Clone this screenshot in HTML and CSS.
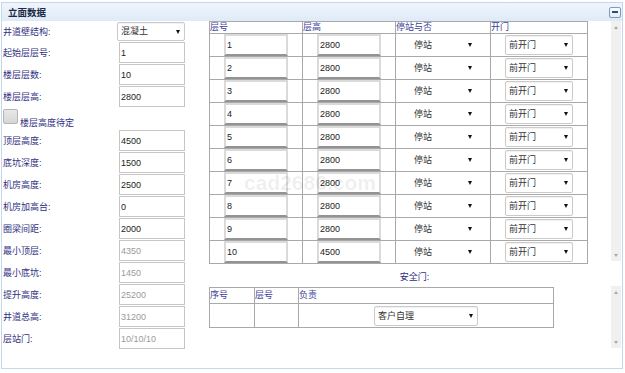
FILE: index.html
```html
<!DOCTYPE html>
<html lang="zh-CN">
<head>
    <meta charset="UTF-8">
    <title>立面数据</title>
    <link rel="stylesheet" href="styles.css">
</head>
<body>
    <div class="panel">
        <div class="panel-head">
            <span class="panel-title">立面数据</span>
            <span class="collapse"><i></i></span>
        </div>

        <div class="panel-body">
            <!-- 井道参数 -->
            <div class="params">
                <div class="row first">
                    <label>井道壁结构:</label>
                    <span class="dropdown wide"><select><option>混凝土</option></select></span>
                </div>
                <div class="row"><label>起始层层号:</label><input type="text" value="1"></div>
                <div class="row"><label>楼层层数:</label><input type="text" value="10"></div>
                <div class="row"><label>楼层层高:</label><input type="text" value="2800"></div>
                <div class="row check">
                    <span class="box"></span>
                    <label>楼层高度待定</label>
                </div>
                <div class="row"><label>顶层高度:</label><input type="text" value="4500"></div>
                <div class="row"><label>底坑深度:</label><input type="text" value="1500"></div>
                <div class="row"><label>机房高度:</label><input type="text" value="2500"></div>
                <div class="row"><label>机房加高台:</label><input type="text" value="0"></div>
                <div class="row"><label>圈梁间距:</label><input type="text" value="2000"></div>
                <div class="row"><label>最小顶层:</label><input type="text" value="4350" disabled></div>
                <div class="row"><label>最小底坑:</label><input type="text" value="1450" disabled></div>
                <div class="row"><label>提升高度:</label><input type="text" value="25200" disabled></div>
                <div class="row"><label>井道总高:</label><input type="text" value="31200" disabled></div>
                <div class="row"><label>层站门:</label><input type="text" value="10/10/10" disabled></div>
            </div>

            <div class="floors">
                <!-- 楼层列表 -->
                <div class="scroll-area tall">
                    <table class="grid floor-grid">
                        <colgroup>
                            <col class="c1"><col class="c2"><col class="c3"><col class="c4">
                        </colgroup>
                        <thead>
                            <tr><th>层号</th><th>层高</th><th>停站与否</th><th>开门</th></tr>
                        </thead>
                        <tbody>
                            <tr>
                                <td><input type="text" value="1"></td>
                                <td><input type="text" value="2800"></td>
                                <td><span class="dropdown plain"><select><option>停站</option></select></span></td>
                                <td><span class="dropdown"><select><option>前开门</option></select></span></td>
                            </tr>
                            <tr>
                                <td><input type="text" value="2"></td>
                                <td><input type="text" value="2800"></td>
                                <td><span class="dropdown plain"><select><option>停站</option></select></span></td>
                                <td><span class="dropdown"><select><option>前开门</option></select></span></td>
                            </tr>
                            <tr>
                                <td><input type="text" value="3"></td>
                                <td><input type="text" value="2800"></td>
                                <td><span class="dropdown plain"><select><option>停站</option></select></span></td>
                                <td><span class="dropdown"><select><option>前开门</option></select></span></td>
                            </tr>
                            <tr>
                                <td><input type="text" value="4"></td>
                                <td><input type="text" value="2800"></td>
                                <td><span class="dropdown plain"><select><option>停站</option></select></span></td>
                                <td><span class="dropdown"><select><option>前开门</option></select></span></td>
                            </tr>
                            <tr>
                                <td><input type="text" value="5"></td>
                                <td><input type="text" value="2800"></td>
                                <td><span class="dropdown plain"><select><option>停站</option></select></span></td>
                                <td><span class="dropdown"><select><option>前开门</option></select></span></td>
                            </tr>
                            <tr>
                                <td><input type="text" value="6"></td>
                                <td><input type="text" value="2800"></td>
                                <td><span class="dropdown plain"><select><option>停站</option></select></span></td>
                                <td><span class="dropdown"><select><option>前开门</option></select></span></td>
                            </tr>
                            <tr>
                                <td><input type="text" value="7"></td>
                                <td><input type="text" value="2800"></td>
                                <td><span class="dropdown plain"><select><option>停站</option></select></span></td>
                                <td><span class="dropdown"><select><option>前开门</option></select></span></td>
                            </tr>
                            <tr>
                                <td><input type="text" value="8"></td>
                                <td><input type="text" value="2800"></td>
                                <td><span class="dropdown plain"><select><option>停站</option></select></span></td>
                                <td><span class="dropdown"><select><option>前开门</option></select></span></td>
                            </tr>
                            <tr>
                                <td><input type="text" value="9"></td>
                                <td><input type="text" value="2800"></td>
                                <td><span class="dropdown plain"><select><option>停站</option></select></span></td>
                                <td><span class="dropdown"><select><option>前开门</option></select></span></td>
                            </tr>
                            <tr>
                                <td><input type="text" value="10"></td>
                                <td><input type="text" value="4500"></td>
                                <td><span class="dropdown plain"><select><option>停站</option></select></span></td>
                                <td><span class="dropdown"><select><option>前开门</option></select></span></td>
                            </tr>
                        </tbody>
                    </table>
                    <div class="watermark">cad2686.com</div>
                    <div class="scrollbar"><span class="up"></span><span class="down"></span></div>
                </div>

                <div class="caption">安全门:</div>

                <!-- 安全门 -->
                <div class="scroll-area short">
                    <table class="grid door-grid">
                        <colgroup>
                            <col class="d1"><col class="d2"><col class="d3">
                        </colgroup>
                        <thead>
                            <tr><th>序号</th><th>层号</th><th>负责</th></tr>
                        </thead>
                        <tbody>
                            <tr>
                                <td></td>
                                <td></td>
                                <td><span class="dropdown long"><select><option>客户自理</option></select></span></td>
                            </tr>
                        </tbody>
                    </table>
                    <div class="scrollbar"><span class="up"></span><span class="down"></span></div>
                </div>
            </div>
        </div>
    </div>
</body>
</html>
```

FILE: styles.css
```css
body {
    margin: 0;
    font-family: "Liberation Sans", "Noto Sans CJK SC", sans-serif;
    font-size: 9px;
    color: #222;
    background-color: #fff;
}

.panel {
    margin: 2px 2px 0 1px;
    height: 365px;
    border: 1px solid #c4d7ef;
}

.panel-head {
    height: 18px;
    display: flex;
    justify-content: space-between;
    align-items: center;
    padding: 0 1px 0 6px;
    background: linear-gradient(#f0f5fc, #dfeaf8);
}

.panel-title {
    font-size: 9.5px;
    font-weight: bold;
    color: #1a2a44;
}

.collapse {
    width: 10px;
    height: 9px;
    display: flex;
    align-items: center;
    justify-content: center;
    border: 1px solid #7f9abb;
    border-radius: 2px;
    background: linear-gradient(#fafcff, #e3ecf7);
}

.collapse i {
    width: 6px;
    height: 2px;
    background-color: #2f4f6f;
}

.panel-body {
    display: flex;
    height: 347px;
}

/* left parameter column */
.params {
    width: 206px;
    padding-left: 1px;
}

.row {
    height: 22px;
    display: flex;
    align-items: center;
}

.row.first {
    height: 20px;
}

.row label {
    width: 114px;
    color: #30307f;
}

.row input {
    align-self: flex-end;
    width: 66px;
    height: 21px;
    margin-left: 2px;
    box-sizing: border-box;
    padding: 0 1px;
    border: 1px solid #c6c6c6;
    font: inherit;
    color: #222;
    background-color: #fff;
}

.row input:disabled {
    color: #9a9a9a;
}

.row.check {
    align-items: flex-end;
}

.row.check .box {
    width: 13px;
    height: 13px;
    margin-bottom: 5px;
    border: 1px solid #b4b4b4;
    border-radius: 2px;
    background: linear-gradient(#e8e8e8, #d6d6d6);
}

.row.check label {
    width: auto;
    margin-left: 2px;
    line-height: 12px;
}

/* dropdowns */
.dropdown {
    position: relative;
    display: inline-block;
    vertical-align: middle;
}

.dropdown select {
    appearance: none;
    -webkit-appearance: none;
    width: 68px;
    height: 20px;
    padding: 0 3px;
    border: 1px solid #cacaca;
    border-radius: 2px;
    font: inherit;
    color: #333;
    background-color: #fff;
    box-shadow: inset 0 1px 1px rgba(0,0,0,0.06);
}

.dropdown::after {
    content: "";
    position: absolute;
    right: 5px;
    top: 8px;
    border-left: 2.5px solid transparent;
    border-right: 2.5px solid transparent;
    border-top: 4px solid #111;
}

.dropdown.wide select {
    height: 19px;
}

.dropdown.plain select {
    border-color: transparent;
    box-shadow: none;
    padding-left: 4px;
}

.dropdown.long select {
    width: 104px;
}

/* right side tables */
.floors {
    flex: 1;
}

.scroll-area {
    position: relative;
    display: flex;
    justify-content: space-between;
    align-items: flex-start;
}

.scroll-area.tall {
    height: 240px;
}

.scroll-area.short {
    height: 62px;
}

.scrollbar {
    align-self: stretch;
    width: 10px;
    margin-right: 1px;
    padding: 5px 0 4px;
    display: flex;
    flex-direction: column;
    justify-content: space-between;
    align-items: center;
    background-color: #f0f0f0;
}

.scrollbar span {
    width: 0;
    height: 0;
    border-left: 2.5px solid transparent;
    border-right: 2.5px solid transparent;
}

.scrollbar .up {
    border-bottom: 3px solid #a8a8a8;
}

.scrollbar .down {
    border-top: 3px solid #a8a8a8;
}

.grid {
    border-collapse: collapse;
    table-layout: fixed;
}

.grid th,
.grid td {
    border: 1px solid #a9a9a9;
    padding: 0;
}

.grid th {
    height: 11px;
    line-height: 11px;
    text-align: left;
    font-weight: normal;
    color: #40409a;
}

.grid td {
    text-align: center;
}

.floor-grid {
    width: 379px;
}

.floor-grid col.c1,
.floor-grid col.c2 {
    width: 93px;
}

.floor-grid col.c3 {
    width: 95px;
}

.floor-grid col.c4 {
    width: 97px;
}

.floor-grid tbody tr {
    height: 22.6px;
}

.floor-grid input {
    width: 64px;
    height: 22px;
    box-sizing: border-box;
    padding: 0 1px;
    border: 2px solid #dadada;
    border-bottom-color: #939393;
    vertical-align: middle;
    font: inherit;
    color: #222;
}

.watermark {
    position: absolute;
    left: 35px;
    top: 150px;
    font-size: 21px;
    font-weight: bold;
    color: rgba(0,0,0,0.07);
    pointer-events: none;
}

.caption {
    height: 25px;
    display: flex;
    align-items: flex-end;
    justify-content: center;
    padding-right: 2px;
    box-sizing: border-box;
    padding-bottom: 3px;
    color: #30307f;
    line-height: 12px;
}

.door-grid {
    width: 345px;
    margin-top: 1px;
}

.door-grid col.d1 {
    width: 45px;
}

.door-grid col.d2 {
    width: 44px;
}

.door-grid col.d3 {
    width: 255px;
}

.door-grid th {
    height: 15px;
    line-height: 15px;
}

.door-grid tbody tr {
    height: 24px;
}
```
